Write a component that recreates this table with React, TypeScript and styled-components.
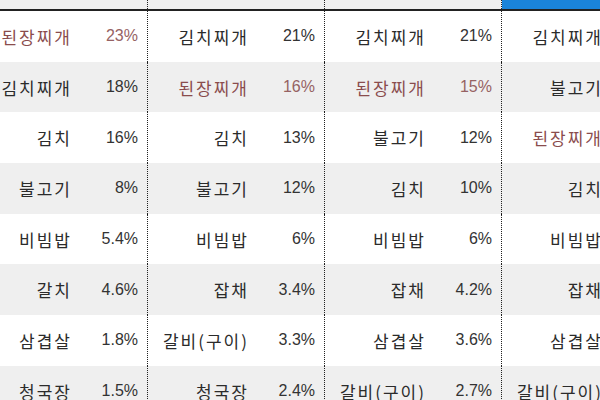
import React from 'react';
import styled, { createGlobalStyle } from 'styled-components';

interface Item {
  name: string;
  pct: string;
}

const GlobalStyle = createGlobalStyle`
  html, body {
    margin: 0;
    padding: 0;
    background: #ffffff;
  }
  body {
    width: 600px;
    height: 400px;
    overflow: hidden;
  }
`;

const groups: Item[][] = [
  [
    { name: '된장찌개', pct: '23%' },
    { name: '김치찌개', pct: '18%' },
    { name: '김치', pct: '16%' },
    { name: '불고기', pct: '8%' },
    { name: '비빔밥', pct: '5.4%' },
    { name: '갈치', pct: '4.6%' },
    { name: '삼겹살', pct: '1.8%' },
    { name: '청국장', pct: '1.5%' },
  ],
  [
    { name: '김치찌개', pct: '21%' },
    { name: '된장찌개', pct: '16%' },
    { name: '김치', pct: '13%' },
    { name: '불고기', pct: '12%' },
    { name: '비빔밥', pct: '6%' },
    { name: '잡채', pct: '3.4%' },
    { name: '갈비(구이)', pct: '3.3%' },
    { name: '청국장', pct: '2.4%' },
  ],
  [
    { name: '김치찌개', pct: '21%' },
    { name: '된장찌개', pct: '15%' },
    { name: '불고기', pct: '12%' },
    { name: '김치', pct: '10%' },
    { name: '비빔밥', pct: '6%' },
    { name: '잡채', pct: '4.2%' },
    { name: '삼겹살', pct: '3.6%' },
    { name: '갈비(구이)', pct: '2.7%' },
  ],
  [
    { name: '김치찌개', pct: '20%' },
    { name: '불고기', pct: '14%' },
    { name: '된장찌개', pct: '13%' },
    { name: '김치', pct: '9%' },
    { name: '비빔밥', pct: '7%' },
    { name: '잡채', pct: '5%' },
    { name: '삼겹살', pct: '3.9%' },
    { name: '갈비(구이)', pct: '2.5%' },
  ],
];

const Sheet = styled.div`
  width: 720px;
  margin-left: -29px;
  display: flex;
  flex-direction: column;
  font-family: "Noto Sans CJK KR", "Noto Sans", "Liberation Sans", sans-serif;
`;

const HeaderStrip = styled.div`
  display: flex;
  height: 9px;
  border-bottom: 2px solid #222222;
  background: #f0f0f0;
`;

const HeaderCell = styled.div<{ active?: boolean }>`
  width: 177px;
  box-sizing: border-box;
  border-right: 1px dotted #202020;
  background: ${({ active }) => (active ? '#1a84da' : 'transparent')};
`;

const Row = styled.div<{ striped?: boolean }>`
  display: flex;
  height: 50.7px;
  background: ${({ striped }) => (striped ? '#efefef' : '#ffffff')};
`;

const Group = styled.div`
  width: 177px;
  box-sizing: border-box;
  display: grid;
  grid-template-columns: 99px 68px;
  padding-right: 9px;
  border-right: 1px dotted #202020;
  align-items: center;
`;

const Name = styled.span<{ highlight?: boolean }>`
  text-align: right;
  white-space: nowrap;
  font-size: 17px;
  letter-spacing: 2px;
  margin-right: -2px;
  color: ${({ highlight }) => (highlight ? '#8a4c4d' : '#2b2b2b')};
`;

const Pct = styled.span<{ highlight?: boolean }>`
  text-align: right;
  white-space: nowrap;
  font-family: "Liberation Sans", "Noto Sans", sans-serif;
  font-size: 16px;
  color: ${({ highlight }) => (highlight ? '#966263' : '#333333')};
`;

const App = () => {
  const rows = groups[0].map((_, i) => i);
  return (
    <>
      <GlobalStyle />
      <Sheet>
        <HeaderStrip>
          {groups.map((_, g) => (
            <HeaderCell key={g} active={g === 3} />
          ))}
        </HeaderStrip>
        {rows.map((r) => (
          <Row key={r} striped={r % 2 === 1}>
            {groups.map((group, g) => {
              const item = group[r];
              const hl = item.name === '된장찌개';
              return (
                <Group key={g}>
                  <Name highlight={hl}>{item.name}</Name>
                  <Pct highlight={hl}>{item.pct}</Pct>
                </Group>
              );
            })}
          </Row>
        ))}
      </Sheet>
    </>
  );
};

export default App;
